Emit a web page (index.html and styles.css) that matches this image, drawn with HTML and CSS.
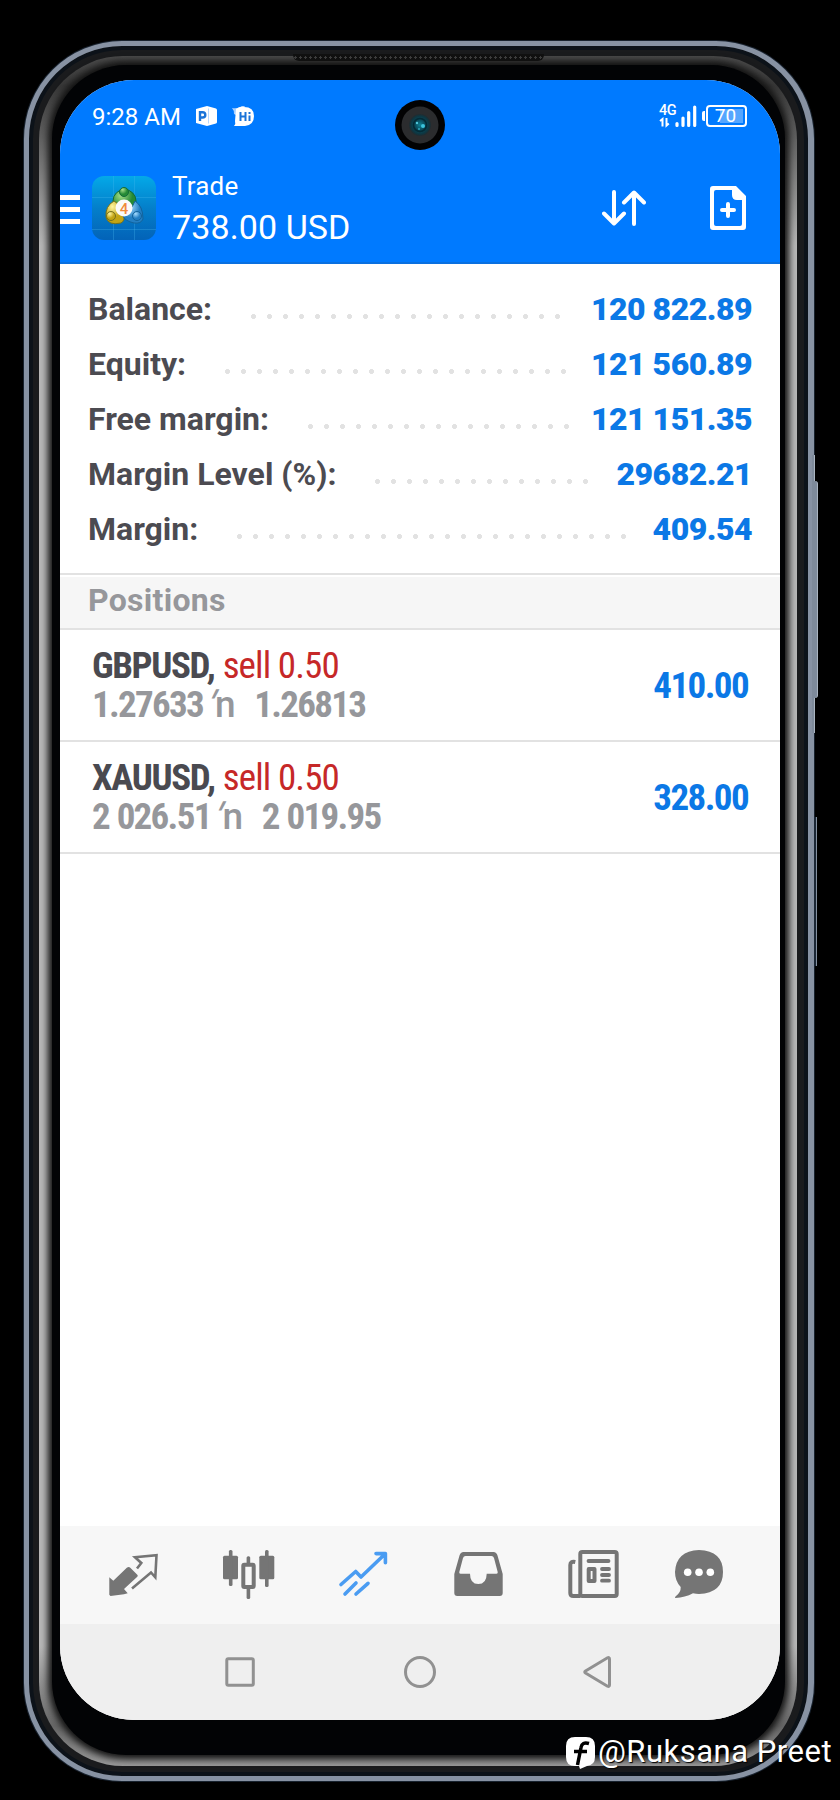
FILE: index.html
```html
<!DOCTYPE html>
<html lang="en">
<head>
    <meta charset="utf-8">
    <title>Trade</title>
    <link rel="stylesheet" href="styles.css">
</head>
<body>
<div class="phone">
    <div class="side-key rail"></div>
    <div class="side-key volume"></div>
    <div class="side-key power"></div>
    <div class="frame">
        <div class="gloss">
            <div class="speaker"></div>
            <div class="bezel">
                <div class="screen">
                    <div class="camera">
                        <svg width="50" height="50" viewBox="0 0 50 50">
                            <defs>
                                <radialGradient id="lens">
                                    <stop offset="0" stop-color="#0e8296"/>
                                    <stop offset=".45" stop-color="#0a4a5a"/>
                                    <stop offset=".8" stop-color="#0c3844"/>
                                    <stop offset="1" stop-color="#222a2e"/>
                                </radialGradient>
                            </defs>
                            <circle cx="25" cy="25" r="25" fill="#020203"/>
                            <circle cx="25" cy="25" r="18.5" fill="#2b2c2e"/>
                            <circle cx="25" cy="25" r="11" fill="url(#lens)"/>
                            <circle cx="25" cy="25" r="6.5" fill="none" stroke="#052a35" stroke-width="1.5"/>
                            <circle cx="28" cy="26" r="2" fill="#3cc3dc"/>
                            <circle cx="22" cy="23" r="1.2" fill="#4fc5d8"/>
                            <circle cx="24" cy="29" r="1" fill="#2fa7bd"/>
                        </svg>
                    </div>

                    <div class="statusbar">
                        <span class="clock">9:28 AM</span>
                        <svg class="note-p" width="21" height="20" viewBox="0 0 21 20">
                            <path d="M0 3 11 0l9 2.500q1 .5 1 1.500v12q0 1-1 1.500L11 20 0 17z" fill="#fff"/>
                            <path d="M12.500 2.500v15" stroke="#b5d7ff" stroke-width="1"/>
                            <path d="M4 15V6.300h2.500q2.800 0 2.800 2.600t-2.800 2.600H4" fill="none" stroke="#1a73d8" stroke-width="2.400"/>
                        </svg>
                        <svg class="note-hi" width="22" height="20" viewBox="0 0 22 20">
                            <path d="M0 2Q6 3 10 0h3L6 10 2 8Q2 4 0 2z" fill="#a8d0ff"/>
                            <path d="M4 3Q8 0 12 1q10 0 10 9t-9 10H2q2-2 1-5z" fill="#fff"/>
                            <path d="M8.500 6v9M13.500 6v9M8.500 10.500h5M17.500 9.500V15M17.500 6v2" fill="none" stroke="#1a73d8" stroke-width="2"/>
                        </svg>
                        <div class="signal">
                            <span class="net">4G</span>
                            <svg width="38" height="24" viewBox="0 0 38 24">
                                <path d="M3.500 22.500v-7.500L1 17M7.500 14v7.500l2.300-2" fill="none" stroke="#fff" stroke-width="2"/>
                                <path d="M18 19.500v2M24 14v7.500M29.700 8.500v13M35.700 3v18.500" fill="none" stroke="#fff" stroke-width="3.200" stroke-linecap="round"/>
                            </svg>
                        </div>
                        <div class="battery"><span>70</span></div>
                    </div>

                    <div class="header">
                        <div class="menu"><i></i><i></i><i></i></div>
                        <svg class="logo" width="64" height="64" viewBox="0 0 64 64">
                            <defs>
                                <linearGradient id="sky" x2="0" y2="1">
                                    <stop offset="0" stop-color="#04a9e8"/>
                                    <stop offset=".5" stop-color="#047fca"/>
                                    <stop offset="1" stop-color="#0363b8"/>
                                </linearGradient>
                                <radialGradient id="green" cx=".35" cy=".25"><stop offset="0" stop-color="#a8e08a"/><stop offset="1" stop-color="#258a35"/></radialGradient>
                                <radialGradient id="gold" cx=".35" cy=".25"><stop offset="0" stop-color="#fff6a0"/><stop offset="1" stop-color="#c2a414"/></radialGradient>
                                <radialGradient id="blue" cx=".35" cy=".25"><stop offset="0" stop-color="#a5dcff"/><stop offset="1" stop-color="#237fc4"/></radialGradient>
                            </defs>
                            <rect width="64" height="64" rx="12" fill="url(#sky)"/>
                            <path d="M21.500 0v64M42.500 0v64M0 21.500h64M0 53.500h64" stroke="#49b9ee" stroke-opacity=".3"/>
                            <circle cx="32.500" cy="25" r="11.500" fill="url(#green)" stroke="#126b38"/>
                            <path d="M22 25q7 4 10 13 1 7-3 9-13 3-15-6-1-11 8-16z" fill="url(#gold)" stroke="#75711c"/>
                            <path d="M43 25q8 5 8 18-2 5-9 4-9-2-11-7 8-5 12-15z" fill="url(#blue)" stroke="#12639c"/>
                            <circle cx="32" cy="16" r="4.500" fill="url(#green)" stroke="#126b38"/>
                            <circle cx="19" cy="40" r="4.500" fill="url(#gold)" stroke="#75711c"/>
                            <circle cx="45" cy="40" r="4.500" fill="url(#blue)" stroke="#12639c"/>
                            <circle cx="32" cy="32" r="8.500" fill="#fafafa"/>
                            <text x="32" y="37.500" text-anchor="middle" class="logo-num">4</text>
                        </svg>
                        <div class="titles">
                            <div class="title">Trade</div>
                            <div class="profit">738.00 USD</div>
                        </div>
                        <svg class="sort" width="44" height="36" viewBox="0 0 44 36">
                            <path d="M12 2v31M2 23.500l10 10 10-10M32 34V3M22 12.500l10-10 10 10" fill="none" stroke="#fff" stroke-width="4" stroke-linecap="round" stroke-linejoin="round"/>
                        </svg>
                        <svg class="new-order" width="36" height="44" viewBox="0 0 36 44">
                            <path fill-rule="evenodd" d="M3 0h23l10 10v31q0 3-3 3H3q-3 0-3-3V3q0-3 3-3zM6 4Q4 4 4 6v32q0 2 2 2h24q2 0 2-2V14h-5q-5 0-5-5V4z" fill="#fff"/>
                            <path d="M18 18v12M12 24h12" stroke="#fff" stroke-width="4" stroke-linecap="round"/>
                        </svg>
                    </div>

                    <div class="account">
                        <div class="line"><span>Balance:</span><i class="dots"></i><b>120 822.89</b></div>
                        <div class="line"><span>Equity:</span><i class="dots"></i><b>121 560.89</b></div>
                        <div class="line"><span>Free margin:</span><i class="dots"></i><b>121 151.35</b></div>
                        <div class="line"><span>Margin Level (%):</span><i class="dots"></i><b>29682.21</b></div>
                        <div class="line"><span>Margin:</span><i class="dots"></i><b>409.54</b></div>
                    </div>

                    <div class="section">Positions</div>

                    <div class="position">
                        <div class="deal">
                            <div class="symbol">GBPUSD, <span>sell 0.50</span></div>
                            <div class="prices">1.27633 <em><i>′</i>n</em>  1.26813</div>
                        </div>
                        <div class="result">410.00</div>
                    </div>
                    <div class="position">
                        <div class="deal">
                            <div class="symbol">XAUUSD, <span>sell 0.50</span></div>
                            <div class="prices">2 026.51 <em><i>′</i>n</em>  2 019.95</div>
                        </div>
                        <div class="result">328.00</div>
                    </div>

                    <div class="tabs">
                        <!-- quotes -->
                        <svg width="56" height="56" viewBox="0 0 56 56">
                            <path d="M3.300 30.300l4 3.400 13.500-13q2-1.500 3.500 0l7 7q1 1 0 2L18 42l3.700 4.300-3.700 1L4.500 49l-1.200-1.300z" fill="#757575"/>
                            <path d="M31 21.500 35.300 16l-6.300-5.700 21.500-2-1.200 22L45 25.500 26 41.500" fill="none" stroke="#757575" stroke-width="2.600"/>
                        </svg>
                        <!-- chart -->
                        <svg width="56" height="56" viewBox="0 0 56 56" fill="#757575">
                            <rect x="2" y="8.700" width="15" height="23.600" rx="1.500"/>
                            <rect x="7.900" y="3" width="3.600" height="36" rx="1.500"/>
                            <rect x="38.300" y="8.700" width="15" height="23.600" rx="1.500"/>
                            <rect x="44" y="3" width="3.600" height="37" rx="1.500"/>
                            <rect x="25.600" y="9.300" width="3.600" height="8" rx="1.500"/>
                            <rect x="25.600" y="40" width="3.600" height="12" rx="1.500"/>
                            <rect x="22.300" y="17.700" width="10.400" height="22.300" rx="1" fill="none" stroke="#757575" stroke-width="4"/>
                        </svg>
                        <!-- trade -->
                        <svg width="56" height="56" viewBox="0 0 56 56" fill="none" stroke="#4a9cf2" stroke-width="3.600" stroke-linecap="round" stroke-linejoin="round">
                            <path d="M5 37.500 19.700 24.500 25 30 49 7M40 6.600h9.400v9.100M9 47 20 36M20 47l12-10.700"/>
                        </svg>
                        <!-- history -->
                        <svg width="56" height="56" viewBox="0 0 56 56">
                            <path fill-rule="evenodd" d="M3.300 27 8.500 8.500Q9.500 5 12.500 5h30q3 0 4 3.500L51.700 27v19q0 3-3 3H6.300q-3 0-3-3zM8.300 25q-.5 1.700 1.200 1.700H19q0 10.300 8.300 10.300t8.400-10.300h9.800q1.600 0 1.200-1.700L43 11q-.7-2-2.500-2h-26q-1.800 0-2.500 2z" fill="#757575"/>
                        </svg>
                        <!-- news -->
                        <svg width="56" height="56" viewBox="0 0 56 56" fill="none" stroke="#757575" stroke-width="4">
                            <rect x="14.300" y="5" width="36.400" height="44" rx="2"/>
                            <path d="M9.300 15Q4.300 14 4.300 18v28q0 3 3 3h7"/>
                            <path d="M22.500 14h20M36 22h7M36 28h7M36 33.700h7" stroke-linecap="round" stroke-width="3.800"/>
                            <rect x="22.700" y="22" width="5.800" height="12" stroke-linejoin="round"/>
                        </svg>
                        <!-- messages -->
                        <svg class="tab-chat" width="56" height="56" viewBox="0 0 56 56">
                            <path d="M28 3q24 1 24 22T28 47q-3 0-6-.8Q14 50.500 4.500 51q-1.200-.5 0-1.500Q10 45.500 9.700 40 4 34 4 25 5 4 28 3z" fill="#757575"/>
                            <g fill="#fff"><circle cx="16.700" cy="25.300" r="3.800"/><circle cx="28" cy="25.300" r="3.800"/><circle cx="39.300" cy="25.300" r="3.800"/></g>
                        </svg>
                    </div>

                    <div class="navbar">
                        <svg width="36" height="36" viewBox="0 0 36 36"><rect x="4.800" y="4.800" width="26.500" height="26.500" rx="1.500"/></svg>
                        <svg width="36" height="36" viewBox="0 0 36 36"><circle cx="18" cy="18" r="14.500"/></svg>
                        <svg width="36" height="36" viewBox="0 0 36 36"><path d="M3.500 17 25.500 3.800q2-.8 2 1.200v26q0 2-2 1.200L3.500 19q-1.500-1 0-2z"/></svg>
                    </div>
                </div>
            </div>
        </div>
    </div>

    <div class="credit">
        <svg width="29" height="32" viewBox="0 0 29 32">
            <path d="M9 0h11q9 0 9 9v11q0 8-8 9l-7 3-1-3H9q-9 0-9-9V9q0-9 9-9z" fill="#fff"/>
            <path d="M23 6.500q-7-2-8 4L11.500 28M8 14.500h13" fill="none" stroke="#000" stroke-width="3.500"/>
        </svg>
        <span>@Ruksana Preet</span>
    </div>
</div>
</body>
</html>
```
FILE: styles.css
```css
* {
    box-sizing: border-box;
}

body {
    margin: 0;
    background: #000;
    font-family: Roboto, "Liberation Sans", sans-serif;
}

svg {
    display: block;
    flex: none;
}

.phone {
    position: relative;
    width: 840px;
    height: 1800px;
    padding: 41px 26px 0 24px;
    overflow: hidden;
}

/* metal rim, then the dark frame inside it */
.frame {
    height: 1740px;
    padding: 10px 11px 10px 10px;
    border: 5px solid #8792a3;
    border-right-width: 6px;
    border-radius: 98px;
    background: #1a1b1d;
    box-shadow: 0 0 0 1px #18222e, inset 0 0 0 4px #0c1219;
}

.gloss {
    position: relative;
    height: 1710px;
    padding: 9px 12px 11px 13px;
    border-radius: 84px;
    background: linear-gradient(#4c4c4c, #383838 30px, #b8b8b8 190px, #b8b8b8 1590px, #666 1670px, #999);
}

.speaker {
    position: absolute;
    left: 254px;
    top: -2px;
    width: 251px;
    height: 7px;
    border-radius: 0 0 6px 6px;
    background: radial-gradient(circle, #3c3c3c 1px, #101010 1.4px) 0 1px / 5px 5px;
}

.bezel {
    height: 1690px;
    padding: 15px 5px 35px 8px;
    border-radius: 74px;
    background: #020305;
    box-shadow: 0 0 7px 4px #111;
}

.screen {
    position: relative;
    display: flex;
    flex-direction: column;
    width: 720px;
    height: 1640px;
    border-radius: 74px;
    background: #fff;
    overflow: hidden;
}

.side-key {
    position: absolute;
    background: #7e8a9a;
    border-right: 1px solid #aab4c0;
}

.rail {
    left: 812px;
    top: 455px;
    width: 3px;
    height: 278px;
}

.volume {
    left: 814px;
    top: 481px;
    width: 4px;
    height: 217px;
    border-radius: 0 3px 3px 0;
}

.power {
    left: 814px;
    top: 817px;
    width: 3px;
    height: 149px;
    background: #1b2735;
    border-color: #8592a2;
}

.camera {
    position: absolute;
    left: 335px;
    top: 20px;
}

.statusbar {
    display: flex;
    align-items: center;
    flex: none;
    height: 74px;
    padding: 0 33px 0 32px;
    background: #007aff;
    color: #fff;
}

.clock {
    width: 104px;
    font-size: 24px;
    white-space: nowrap;
}

.note-p {
    margin-bottom: 2px;
}

.note-hi {
    margin: 0 auto 2px 15px;
}

.signal {
    position: relative;
    margin: -2px 5px 0 0;
}

.net {
    position: absolute;
    left: 0;
    top: 0;
    font-size: 14.5px;
    line-height: 14px;
    font-weight: 500;
    letter-spacing: -0.5px;
}

.battery {
    position: relative;
    width: 41px;
    height: 22px;
    margin: -2px 0 0 4px;
    border: 2px solid #fff;
    border-radius: 4px;
    background: linear-gradient(#55a6ff, #55a6ff) 12px 2px / 23px 14px no-repeat;
    font-size: 19px;
    line-height: 18px;
    text-align: center;
}

.battery span {
    margin-right: 2px;
}

.battery::before {
    content: "";
    position: absolute;
    left: -6px;
    top: 4px;
    width: 3px;
    height: 10px;
    border-radius: 2px 0 0 2px;
    background: #fff;
}

.header {
    display: flex;
    flex: none;
    height: 110px;
    padding: 22px 34px 0 0;
    background: #007aff;
    border-bottom: 2px solid #0a70e0;
    color: #fff;
}

.menu {
    display: flex;
    flex-direction: column;
    gap: 7px;
    width: 20px;
    padding-top: 19px;
}

.menu i {
    height: 5px;
    background: #fff;
}

.logo {
    margin-left: 12px;
}

.logo-num {
    font: 500 15px Roboto, sans-serif;
    fill: #f08a3c;
}

.titles {
    flex: 1;
    margin: -5px 0 0 16px;
    white-space: nowrap;
}

.title {
    font-size: 26px;
    line-height: 30px;
    letter-spacing: 0.2px;
}

.profit {
    margin-top: 6px;
    font-size: 34px;
    line-height: 40px;
    letter-spacing: 0.1px;
}

.sort {
    margin: 14px 64px 0 0;
}

.new-order {
    margin-top: 10px;
}

.account {
    flex: none;
    height: 311px;
    padding: 18px 28px 0 28px;
    border-bottom: 2px solid #e2e2e2;
}

.line {
    display: flex;
    height: 55px;
    line-height: 55px;
    font-size: 32px;
    font-weight: 700;
    color: #4c4b51;
    white-space: nowrap;
}

.line b {
    letter-spacing: -0.5px;
    color: #0b78e6;
}

.dots {
    flex: 1;
    height: 5px;
    margin: 32px 21px 0 39px;
    background: radial-gradient(circle at 2.5px 2.5px, #e2e2e2 2.2px, transparent 2.8px) 0 0 / 16px 5px repeat-x;
}

.section {
    flex: none;
    height: 55px;
    padding-left: 28px;
    border-top: 2px solid #fff;
    border-bottom: 2px solid #e2e2e2;
    background: #f6f6f6;
    color: #96979b;
    font-size: 32px;
    line-height: 46px;
    font-weight: 700;
    letter-spacing: 0.3px;
}

.position {
    display: flex;
    flex: none;
    justify-content: space-between;
    height: 112px;
    padding: 16px 32px 0 32px;
    border-bottom: 2px solid #e2e2e2;
    font-family: "Roboto Condensed", Roboto, sans-serif;
    font-size: 37px;
    font-weight: 700;
    letter-spacing: -1.6px;
}

.symbol {
    line-height: 39px;
    letter-spacing: -1.4px;
    color: #4a4a50;
    white-space: pre;
}

.symbol span {
    margin-left: 1px;
    font-weight: 400;
    letter-spacing: -0.9px;
    color: #c62828;
}

.prices {
    line-height: 39px;
    letter-spacing: -1.7px;
    word-spacing: 0.8px;
    color: #96979b;
    white-space: pre;
}

.prices em {
    margin: 0 5px 0 1px;
    font-family: Roboto, sans-serif;
    font-style: normal;
    font-weight: 500;
}

.prices em i {
    display: inline-block;
    margin: 0 4px 0 -5px;
    line-height: 1;
    transform: skewX(-18deg);
}

.result {
    line-height: 80px;
    color: #0b78e6;
}

.tabs {
    display: flex;
    flex: none;
    gap: 59px;
    height: 98px;
    margin-top: auto;
    padding: 21px 0 0 46px;
    background: #f7f7f7;
}

.tab-chat {
    margin-left: -10px;
}

.navbar {
    display: flex;
    flex: none;
    align-items: center;
    justify-content: center;
    gap: 144px;
    height: 96px;
    background: #efefef;
}

.navbar svg {
    fill: none;
    stroke: #919191;
    stroke-width: 3px;
}

.credit {
    position: absolute;
    left: 566px;
    top: 1737px;
    display: flex;
    color: #fff;
    font-size: 31px;
    line-height: 30px;
    letter-spacing: 0.5px;
    white-space: nowrap;
    text-shadow: 1px 1px 1px #000;
}

.credit span {
    margin-left: 3px;
}
```
